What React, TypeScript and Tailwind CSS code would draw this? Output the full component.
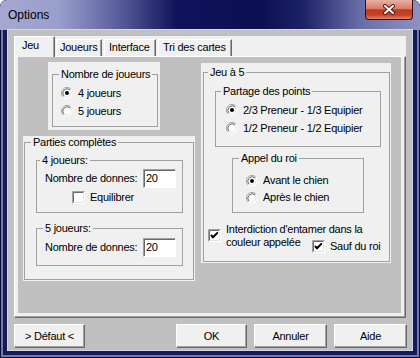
import React from "react";

function Radio({ checked }: { checked?: boolean }) {
  return (
    <svg width="12" height="12" viewBox="0 0 12 12" className="shrink-0">
      <circle cx="6" cy="6" r="5.5" fill="#fff" />
      <path d="M2.1 9.9 A5.5 5.5 0 0 1 9.9 2.1" fill="none" stroke="#a0a0a0" />
      <path d="M2.9 9.1 A4.4 4.4 0 0 1 9.1 2.9" fill="none" stroke="#696969" />
      <path d="M9.1 2.9 A4.4 4.4 0 0 1 2.9 9.1" fill="none" stroke="#e3e3e3" />
      {checked && <circle cx="6" cy="6" r="2" fill="#000" />}
    </svg>
  );
}

function Check({ checked }: { checked?: boolean }) {
  return (
    <svg width="13" height="13" viewBox="0 0 13 13" className="shrink-0">
      <rect x="0" y="0" width="13" height="13" fill="#fff" />
      <path d="M0.5 12.5 V0.5 H12.5" fill="none" stroke="#a0a0a0" />
      <path d="M1.5 11.5 V1.5 H11.5" fill="none" stroke="#696969" />
      <path d="M1.5 11.5 H11.5 V1.5" fill="none" stroke="#e3e3e3" />
      {checked && (
        <path d="M3 6 L5 8.2 L9.8 3.4" fill="none" stroke="#000" strokeWidth="2" />
      )}
    </svg>
  );
}

function Field({ value }: { value: string }) {
  return (
    <div className="ml-auto w-[33px] h-[19px] bg-white flex items-center pl-[2px] border border-t-[#a0a0a0] border-l-[#a0a0a0] border-r-white border-b-white shadow-[inset_1px_1px_0_#696969]">
      {value}
    </div>
  );
}

function RadioRow({ label, checked, className }: { label: string; checked?: boolean; className: string }) {
  return (
    <div className={"flex items-center gap-[5px] " + className}>
      <Radio checked={checked} />
      <span>{label}</span>
    </div>
  );
}

function Btn({ label, className }: { label: string; className: string }) {
  return (
    <div
      className={
        "h-[24px] flex items-center justify-center bg-[#f0f0f0] border border-t-white border-l-white border-r-[#696969] border-b-[#696969] shadow-[inset_-1px_-1px_0_#a0a0a0] " +
        className
      }
    >
      {label}
    </div>
  );
}

export default function App() {
  return (
    <div className="w-[420px] h-[358px] flex flex-col rounded-t-[7px] overflow-hidden bg-[#161a5a] shadow-[inset_0_0_0_1px_#0b0d33,inset_0_0_0_3px_#7378b0] font-['Liberation_Sans',Arial,sans-serif] text-[11px] leading-[13px] tracking-[-0.25px] text-black">
      {/* title bar */}
      <div className="h-[30px] shrink-0 flex items-start bg-[linear-gradient(90deg,#a4a8d2_0%,#9a9ecb_14%,#5a5f9c_28%,#10135a_42%,#0c0f52_62%,#1c2066_72%,#6a6ea8_86%,#8d91c2_100%)]">
        <span className="mt-[8px] ml-[8px] text-[12px] leading-[15px] tracking-normal">Options</span>
        <div className="ml-auto mr-[7px] w-[48px] h-[20px] flex items-center justify-center rounded-b-[4px] border border-t-0 border-[#3c0c0c] bg-[linear-gradient(180deg,#e9b2a4_0%,#d77c66_45%,#c2371f_52%,#c44428_80%,#e0876a_100%)]">
          <svg width="14" height="11" viewBox="0 0 14 11">
            <path d="M3 2 L11 9 M11 2 L3 9" stroke="#5a1a14" strokeWidth="4" strokeLinecap="round" />
            <path d="M3 2 L11 9 M11 2 L3 9" stroke="#fff" strokeWidth="2" strokeLinecap="round" />
          </svg>
        </div>
      </div>

      {/* client */}
      <div className="ml-[8px] w-[404px] h-[320px] bg-[#c0c0c0] shadow-[0_0_0_1px_#d4d6e6] flex flex-col">
        {/* tab strip */}
        <div className="mt-[6px] ml-[6px] w-[392px] h-[20px] bg-[#f0f0f0] flex items-end">
          <div className="relative z-10 -mb-[1px] w-[41px] h-[21px] bg-[#f0f0f0] pt-[2px] pl-[7px] border-l border-t border-white border-r border-r-[#696969] shadow-[inset_-1px_0_0_#a0a0a0]">
            Jeu
          </div>
          <div className="ml-[1px] w-[46px] h-[17px] pt-[1px] pl-[3px] border-l border-t border-white border-r border-r-[#696969] shadow-[inset_-1px_0_0_#a0a0a0]">
            Joueurs
          </div>
          <div className="ml-[2px] w-[52px] h-[17px] pt-[1px] pl-[4px] border-l border-t border-white border-r border-r-[#696969] shadow-[inset_-1px_0_0_#a0a0a0]">
            Interface
          </div>
          <div className="ml-[2px] w-[74px] h-[17px] pt-[1px] pl-[4px] border-l border-t border-white border-r border-r-[#696969] shadow-[inset_-1px_0_0_#a0a0a0]">
            Tri des cartes
          </div>
        </div>

        {/* tab panel */}
        <div className="ml-[6px] w-[392px] h-[262px] bg-[#f0f0f0] pl-[3px] pr-[4px] pb-[4px] border-l border-t border-white border-r border-b border-r-[#696969] border-b-[#696969] shadow-[inset_-1px_-1px_0_#a0a0a0]">
          <div className="w-[383px] h-[256px] bg-[#c0c0c0] flex items-start">
            {/* left column */}
            <div className="ml-[5px] w-[172px] flex flex-col">
              <div className="ml-[25px] mt-[5px] w-[112px] h-[68px] bg-[#f0f0f0] pl-[4px] pr-[2px] pt-[6px]">
                <fieldset className="h-[59px] border border-[#a0a0a0]">
                  <legend className="ml-[6px] px-[2px]">Nombre de joueurs</legend>
                  <RadioRow className="mt-[3px] h-[18px] pl-[8px]" label="4 joueurs" checked />
                  <RadioRow className="h-[18px] pl-[8px]" label="5 joueurs" />
                </fieldset>
              </div>

              <div className="mt-[6px] w-[172px] h-[145px] bg-[#f0f0f0] px-[1px]">
                <fieldset className="h-[144px] border border-[#a0a0a0]">
                  <legend className="ml-[6px] px-[2px]">Parties complètes</legend>
                  <fieldset className="mt-[5px] ml-[11px] w-[147px] h-[59px] border border-[#a0a0a0]">
                    <legend className="ml-[3px] px-[2px]">4 joueurs:</legend>
                    <div className="mt-[2px] h-[19px] flex items-center pl-[8px] pr-[6px]">
                      <span>Nombre de donnes:</span>
                      <Field value="20" />
                    </div>
                    <div className="mt-[3px] h-[13px] flex items-center gap-[5px] pl-[35px]">
                      <Check />
                      <span>Equilibrer</span>
                    </div>
                  </fieldset>
                  <fieldset className="mt-[9px] ml-[11px] w-[147px] h-[44px] border border-[#a0a0a0]">
                    <legend className="ml-[6px] px-[2px]">5 joueurs:</legend>
                    <div className="mt-[3px] h-[19px] flex items-center pl-[8px] pr-[6px]">
                      <span>Nombre de donnes:</span>
                      <Field value="20" />
                    </div>
                  </fieldset>
                </fieldset>
              </div>
            </div>

            {/* right column */}
            <div className="ml-[6px] mt-[6px] w-[190px] h-[200px] bg-[#f0f0f0] pl-[2px] pr-[1px] pt-[3px]">
              <fieldset className="h-[196px] border border-[#a0a0a0]">
                <legend className="ml-[4px] px-[2px]">Jeu à 5</legend>
                <fieldset className="mt-[6px] ml-[11px] w-[166px] h-[62px] border border-[#a0a0a0]">
                  <legend className="ml-[5px] px-[2px]">Partage des points</legend>
                  <RadioRow className="mt-[3px] h-[18px] pl-[10px]" label="2/3 Preneur - 1/3 Equipier" checked />
                  <RadioRow className="h-[18px] pl-[10px]" label="1/2 Preneur - 1/2 Equipier" />
                </fieldset>
                <fieldset className="mt-[5px] ml-[28px] w-[132px] h-[61px] border border-[#a0a0a0]">
                  <legend className="ml-[6px] px-[2px]">Appel du roi</legend>
                  <RadioRow className="mt-[7px] h-[17px] pl-[13px]" label="Avant le chien" checked />
                  <RadioRow className="h-[17px] pl-[13px]" label="Après le chien" />
                </fieldset>
                <div className="mt-[10px] ml-[4px] flex items-start">
                  <div className="mt-[6px]">
                    <Check checked />
                  </div>
                  <div className="ml-[5px] flex flex-col">
                    <span>Interdiction d'entamer dans la</span>
                    <div className="flex items-start">
                      <span className="w-[86px]">couleur appelée</span>
                      <div className="mt-[4px] flex items-center gap-[5px]">
                        <Check checked />
                        <span>Sauf du roi</span>
                      </div>
                    </div>
                  </div>
                </div>
              </fieldset>
            </div>
          </div>
        </div>

        {/* buttons */}
        <div className="mt-[6px] pl-[6px] pr-[5px] flex">
          <Btn className="w-[71px]" label="> Défaut <" />
          <Btn className="ml-auto w-[71px]" label="OK" />
          <Btn className="ml-[7px] w-[73px]" label="Annuler" />
          <Btn className="ml-[7px] w-[73px]" label="Aide" />
        </div>
      </div>
    </div>
  );
}
